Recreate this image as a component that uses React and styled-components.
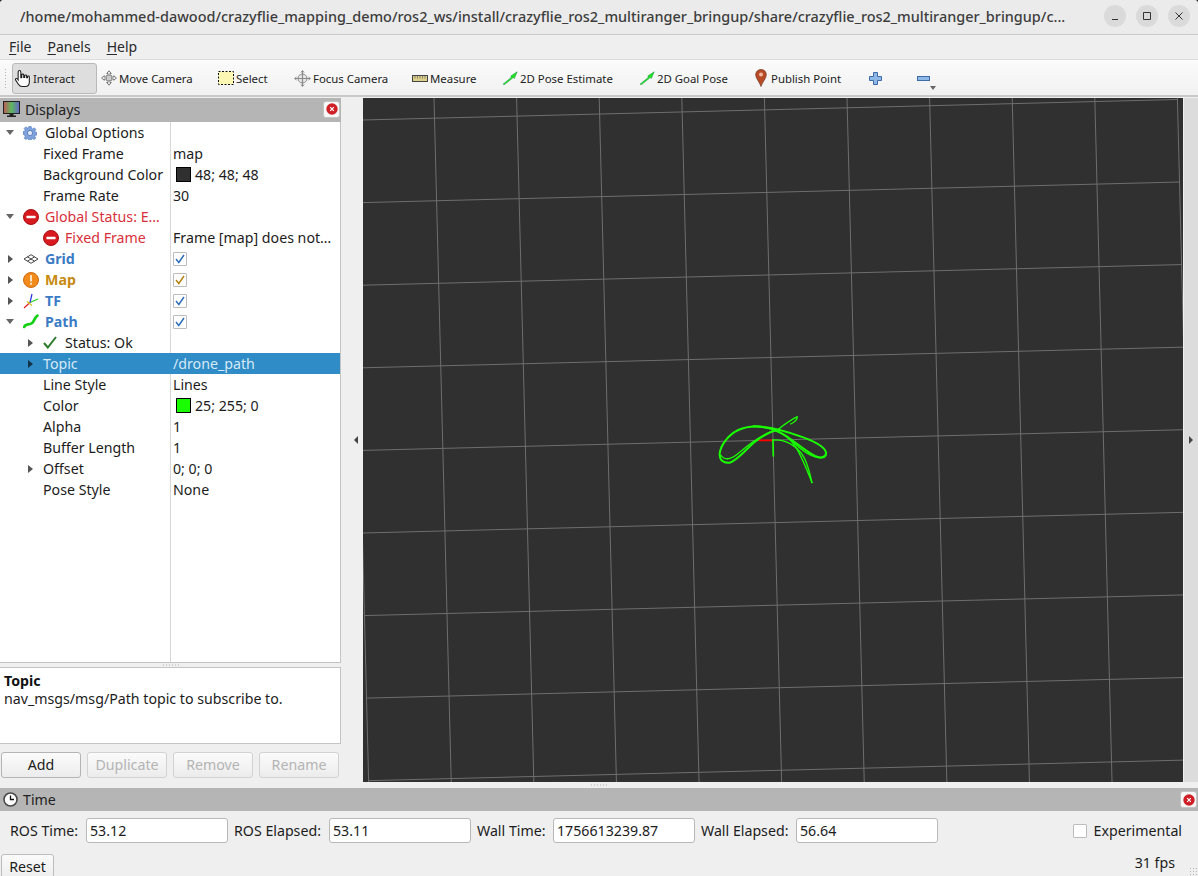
import React from "react";
import styled, { createGlobalStyle } from "styled-components";

const Global = createGlobalStyle`
  html, body { margin: 0; padding: 0; background: #2c2c2c; }
  * { box-sizing: border-box; }
  body { font-family: "Noto Sans", "Open Sans", sans-serif; font-size: 14.2px; color: #1c1c1c; }
`;

const Win = styled.div`
  width: 1198px;
  height: 876px;
  overflow: hidden;
  background: #efefef;
  border-radius: 4px 4px 0 0;
  display: flex;
  flex-direction: column;
`;

const TitleBar = styled.div`
  height: 35px;
  flex: none;
  background: #ebebeb;
  border-bottom: 1px solid #c9c9c9;
  display: flex;
  align-items: center;
  padding: 0 8px 2px 20px;
`;

const TitleText = styled.div`
  flex: 1;
  font-size: 14.45px;
  font-weight: 500;
  color: #3d3d3d;
  white-space: nowrap;
`;

const WinBtn = styled.div`
  width: 22px;
  height: 22px;
  border-radius: 50%;
  background: #dadada;
  margin-left: 10px;
  display: grid;
  place-items: center;
`;

const MenuBar = styled.div`
  height: 24px;
  flex: none;
  background: #efefef;
  display: flex;
  gap: 16px;
  padding: 0 0 2px 9px;
  align-items: center;
  font-size: 14px;
`;

const MenuItem = styled.span`
  color: #2a2a2a;
  u { text-underline-offset: 2px; }
`;

const ToolBar = styled.div`
  height: 38px;
  flex: none;
  background: linear-gradient(#fbfbfb, #f1f1f1);
  border-top: 1px solid #dcdcdc;
  border-bottom: 2px solid #c9c9c9;
  display: flex;
  align-items: center;
  padding: 1px 0 0 4px;
  font-size: 11.4px;
  position: relative;
`;

const Grip = styled.div`
  width: 4px;
  height: 20px;
  margin-right: 4px;
  background-image: radial-gradient(#b4b4b4 0.7px, transparent 0.8px);
  background-size: 3px 3px;
`;

const Tool = styled.div`
  width: ${(p) => p.$w}px;
  height: 31px;
  flex: none;
  display: flex;
  align-items: center;
  gap: ${(p) => p.$gap ?? 2}px;
  padding-left: ${(p) => p.$pad ?? 4}px;
  color: #222;
  white-space: nowrap;
  ${(p) =>
    p.$active &&
    `background: #dedede; border: 1px solid #b9b9b9; border-radius: 3px;`}
`;

const MoreArrow = styled.div`
  position: absolute;
  left: 930px;
  top: 26px;
  border: 3px solid transparent;
  border-top: 4px solid #666;
  border-bottom: 0;
`;

const Main = styled.div`
  flex: 1;
  min-height: 0;
  display: flex;
  padding-top: 1px;
`;

const Sidebar = styled.div`
  width: 341px;
  flex: none;
  display: flex;
  flex-direction: column;
`;

const DockHeader = styled.div`
  height: ${(p) => p.$h}px;
  flex: none;
  background: #b5b5b5;
  display: flex;
  align-items: center;
  gap: 5px;
  padding: 0 1px ${(p) => p.$pb}px 3px;
  font-size: 14.2px;
  color: #222;
`;

const DockTitle = styled.span`
  flex: 1;
`;

const CloseBtn = styled.div`
  width: 17px;
  height: 17px;
  background: #f8f8f8;
  border: 1px solid #c4c4c4;
  border-radius: 3px;
  display: grid;
  place-items: center;
`;

const Tree = styled.div`
  height: 541px;
  flex: none;
  background: #fff;
  border-right: 1px solid #c4c4c4;
  border-bottom: 1px solid #c4c4c4;
  position: relative;
  &::before {
    content: "";
    position: absolute;
    left: 170px;
    top: 0;
    bottom: 0;
    width: 1px;
    background: #d8d8d8;
  }
`;

const Row = styled.div`
  height: 21px;
  display: grid;
  grid-template-columns: 170px 1fr;
  align-items: center;
  position: relative;
  white-space: nowrap;
  background: ${(p) => (p.$selected ? "#308cc6" : "transparent")};
  color: ${(p) => (p.$selected ? "#d6e9f6" : "#1c1c1c")};
`;

const NameCell = styled.div`
  display: flex;
  align-items: center;
  padding-left: ${(p) => p.$level * 20}px;
`;

const ArrowSlot = styled.div`
  width: 20px;
  flex: none;
  display: grid;
  place-items: center;
`;

const Arrow = styled.div`
  width: 0;
  height: 0;
  border-style: solid;
  ${(p) =>
    p.$dir === "down"
      ? `border-width: 5px 4px 0 4px; border-color: #666 transparent transparent transparent;`
      : `border-width: 4px 0 4px 5px; border-color: transparent transparent transparent ${p.$dark ? "#12324a" : "#555"};`}
`;

const IconSlot = styled.div`
  width: 25px;
  flex: none;
  display: flex;
  align-items: center;
  padding-left: 3px;
`;

const Label = styled.span`
  padding-left: ${(p) => (p.$plain ? 3 : 0)}px;
  font-weight: ${(p) => (p.$bold ? 700 : 400)};
  color: ${(p) => p.$color || "inherit"};
`;

const ValueCell = styled.div`
  padding-left: 3px;
  display: flex;
  align-items: center;
`;

const Swatch = styled.span`
  width: 15px;
  height: 15px;
  margin: 0 4px 0 3px;
  background: ${(p) => p.$color};
  border: 1px solid #000;
`;

const Check = styled.span`
  width: 14px;
  height: 14px;
  background: #fff;
  border: 1px solid #bcbcbc;
  border-radius: 1px;
  display: grid;
  place-items: center;
`;

const HSplit = styled.div`
  height: ${(p) => p.$h}px;
  flex: none;
  display: flex;
  justify-content: center;
  align-items: center;
`;

const Dots = styled.div`
  width: 18px;
  height: 2px;
  background-image: radial-gradient(#b0b0b0 0.7px, transparent 0.8px);
  background-size: 3px 2px;
`;

const HelpBox = styled.div`
  height: 77px;
  flex: none;
  background: #fff;
  border: 1px solid #c4c4c4;
  border-left: 0;
  padding: 4px 4px;
  line-height: 18px;
`;

const HelpTitle = styled.div`
  font-weight: 700;
  color: #111;
`;

const ButtonRow = styled.div`
  display: flex;
  gap: 6px;
  padding: 8px 0 0 1px;
`;

const Btn = styled.div`
  width: ${(p) => p.$w || 80}px;
  height: 26px;
  flex: none;
  display: grid;
  place-items: center;
  padding-bottom: 2px;
  border: 1px solid ${(p) => (p.$off ? "#d2d2d2" : "#b4b4b4")};
  border-radius: 3px;
  background: linear-gradient(#fbfbfb, #ececec);
  color: ${(p) => (p.$off ? "#b4b4b4" : "#1c1c1c")};
`;

const SideGap = styled.div`
  width: 22px;
  flex: none;
  display: flex;
  align-items: center;
  padding-left: 13px;
`;

const Triangle = styled.div`
  width: 0;
  height: 0;
  border-style: solid;
  border-color: transparent;
  border-width: 4px 0;
  ${(p) =>
    p.$left
      ? `border-right: 4px solid #444; border-left: 0;`
      : `border-left: 4px solid #444; border-right: 0;`}
`;

const ViewColumn = styled.div`
  flex: 1;
  min-width: 0;
  display: flex;
`;

const ViewPort = styled.svg`
  display: block;
  width: 820px;
  height: 684px;
  background: #303030;
  flex: none;
`;

const RightStrip = styled.div`
  flex: 1;
  height: 684px;
  margin-left: 1px;
  background: #dcdcdc;
  display: flex;
  align-items: center;
  justify-content: center;
`;

const BottomSplit = styled.div`
  height: 6px;
  flex: none;
  display: flex;
  justify-content: center;
  align-items: center;
`;

const TimeRow = styled.div`
  height: 39px;
  flex: none;
  display: flex;
  align-items: flex-start;
  padding: 7px 16px 0 10px;
`;

const TimeLabel = styled.span`
  width: ${(p) => p.$w}px;
  flex: none;
  line-height: 25px;
  white-space: nowrap;
`;

const TimeInput = styled.div`
  width: 142px;
  height: 25px;
  flex: none;
  margin-right: 6px;
  background: #fff;
  border: 1px solid #b9b9b9;
  border-radius: 3px;
  padding-left: 3px;
  line-height: 23px;
`;

const Experimental = styled.div`
  margin-left: auto;
  display: flex;
  align-items: center;
  gap: 7px;
  height: 25px;
`;

const FooterRow = styled.div`
  display: flex;
  justify-content: space-between;
  padding: 4px 23px 0 1px;
  height: 26px;
  position: relative;
`;

const ResetBtn = styled(Btn)`
  height: 28px;
  padding-bottom: 4px;
  border-color: #bdbdbd;
`;

const Fps = styled.span`
  padding-top: 1px;
  line-height: 16px;
`;

const CornerGrip = styled.div`
  position: absolute;
  right: 0;
  bottom: 0;
  width: 9px;
  height: 9px;
  background-image: radial-gradient(#b8b8b8 0.7px, transparent 0.8px);
  background-size: 3px 3px;
`;

/* ---- icons ---- */
const HandIcon = () => (
  <svg width="17" height="17" viewBox="1.2 1 14.600 16" preserveAspectRatio="none" style={{ marginRight: 1 }}>
    <path
      d="M5 1.500c.8 0 1.200.6 1.200 1.300v5.400l.8-.1V5.600c0-1 1.700-1 1.700 0v2.500h.8V6.400c0-1 1.700-1 1.700 0v2h.7V7.300c0-1 1.600-1 1.600 0v5c0 2.600-1.400 4.200-3.500 4.200H7.300c-1.600 0-2.300-.7-3.200-2.200L1.700 10.300c-.6-1 .7-1.900 1.500-1l.7 1V2.800c0-.7.4-1.300 1.100-1.300z"
      fill="#fff"
      stroke="#1a1a1a"
      strokeWidth=".9"
    />
  </svg>
);

const MoveIcon = () => (
  <svg width="16" height="16" viewBox="0 0 16 16" fill="#eee" stroke="#777" strokeWidth="1">
    <path d="M8 .8l2.300 2.700H9v1.800l-1 .6-1-.6V3.500H5.700z" />
    <path d="M8 15.200l2.300-2.700H9v-1.800l-1-.6-1 .6v1.800H5.700z" />
    <path d="M.6 8l2.700-2.300V7H5l.8 1-.8 1H3.300v1.300z" />
    <path d="M15.400 8l-2.700-2.300V7H11l-.8 1 .8 1h1.700v1.300z" />
    <rect x="5.500" y="5.500" width="5" height="5" fill="#ccc" stroke="#999" />
  </svg>
);

const SelectIcon = () => (
  <svg width="16" height="14" viewBox="0 0 16 14">
    <rect x=".5" y=".5" width="15" height="13" fill="#fdf7b4" stroke="#111" strokeDasharray="2 1.500" />
  </svg>
);

const FocusIcon = () => (
  <svg width="17" height="17" viewBox="0 0 17 17" fill="none" stroke="#8a8a8a">
    <circle cx="8.500" cy="8.500" r="4.500" fill="#e6e6e6" />
    <path d="M8.500 1v15M1 8.500h15" strokeWidth="1.200" />
    <path d="M7 2.500l1.500-2 1.500 2M7 14.500l1.500 2 1.500-2M2.500 7L.5 8.500 2.500 10M14.500 7l2 1.500-2 1.500" />
  </svg>
);

const RulerIcon = () => (
  <svg width="16" height="7" viewBox="0 0 16 7">
    <rect x=".5" y=".5" width="15" height="6" fill="#ddd08a" stroke="#444" />
    <path d="M3 1v2.500M5.500 1v2.500M8 1v2.500M10.500 1v2.500M13 1v2.500" stroke="#666" strokeWidth=".7" />
  </svg>
);

const PoseIcon = () => (
  <svg width="16" height="14" viewBox="0 0 16 14">
    <path d="M1 13.200L9.500 6.200 8.800 5 15.200 .8 12.300 7.500 11.300 6.500 2.500 13.600z" fill="#1fe81f" stroke="#0f8a3c" strokeWidth=".5" />
  </svg>
);

const PinIcon = () => (
  <svg width="12" height="18" viewBox="0 0 12 18">
    <path d="M6 .5C2.800.5.700 2.800.7 5.800c0 3.700 3.800 7 5.300 11.700 1.500-4.700 5.300-8 5.300-11.700C11.300 2.800 9.200.5 6 .5z" fill="#b84a26" stroke="#6e3a20" strokeWidth=".7" />
    <circle cx="6" cy="5.500" r="2" fill="#f0b9a0" />
  </svg>
);

const PlusIcon = () => (
  <svg width="13" height="13" viewBox="0 0 13 13">
    <path d="M4.500.5h4v4h4v4h-4v4h-4v-4h-4v-4h4z" fill="#8fb8e6" stroke="#3c6ca8" />
  </svg>
);

const MinusIcon = () => (
  <svg width="13" height="5" viewBox="0 0 13 5">
    <rect x=".5" y=".5" width="12" height="4" fill="#8fb8e6" stroke="#3c6ca8" />
  </svg>
);

const MonitorIcon = () => (
  <svg width="17" height="17" viewBox="0 0 17 17">
    <defs>
      <linearGradient id="rgb" x1="0" x2="1" y1="0" y2="0">
        <stop offset="0" stopColor="#c05858" />
        <stop offset=".5" stopColor="#5fb85f" />
        <stop offset="1" stopColor="#6666c8" />
      </linearGradient>
    </defs>
    <rect x=".5" y=".5" width="16" height="12" fill="url(#rgb)" stroke="#222" />
    <path d="M6.500 13h4v1.500h2.500V16H4v-1.500h2.500z" fill="#222" />
  </svg>
);

const GearIcon = () => (
  <svg width="14" height="14" viewBox="0 0 14 14">
    <path
      d="M5.800.6h2.400l.3 1.800 1.200.5L11.200 1.800l1.700 1.700-1.100 1.500.5 1.200 1.800.3v2.400l-1.800.3-.5 1.200 1.100 1.500-1.700 1.700-1.500-1.100-1.200.5-.3 1.800H5.800l-.3-1.800-1.200-.5-1.500 1.100-1.700-1.700 1.100-1.500-.5-1.200L-.1 8V5.600l1.800-.3.5-1.200-1.100-1.500 1.700-1.700 1.500 1.100 1.200-.5z"
      fill="#7ea2dc"
      stroke="#4a72b8"
      strokeWidth=".6"
    />
    <circle cx="7" cy="7" r="2.600" fill="#dfe9f8" stroke="#4a72b8" strokeWidth=".8" />
  </svg>
);

const ErrorIcon = () => (
  <svg width="16" height="16" viewBox="0 0 16 16">
    <circle cx="8" cy="8" r="7.500" fill="#d61a1f" stroke="#a80f12" />
    <rect x="3.500" y="6.700" width="9" height="2.600" rx=".5" fill="#fff" />
  </svg>
);

const WarnIcon = () => (
  <svg width="16" height="16" viewBox="0 0 16 16">
    <circle cx="8" cy="8" r="7.500" fill="#f28a1c" stroke="#d06a10" />
    <rect x="7" y="3" width="2" height="6.500" rx=".6" fill="#fde6c8" />
    <rect x="7" y="10.800" width="2" height="2" rx=".6" fill="#fde6c8" />
  </svg>
);

const GridIcon = () => (
  <svg width="16" height="10" viewBox="0 0 16 10" fill="none" stroke="#333" strokeWidth=".9">
    <path d="M8 .7L15 5 8 9.300 1 5z" />
    <path d="M4.500 2.900L11.500 7.200M11.500 2.900L4.500 7.200" />
  </svg>
);

const TfIcon = () => (
  <svg width="16" height="16" viewBox="0 0 16 16" fill="none" strokeWidth="1.200">
    <path d="M7 9.500L1 15" stroke="#e02020" />
    <path d="M7 9.500L15 6" stroke="#20d020" />
    <path d="M7 9.500L9 1" stroke="#2030e0" />
    <path d="M4 8.500L9 12.500" stroke="#d8c020" />
  </svg>
);

const PathIcon = () => (
  <svg width="16" height="15" viewBox="0 0 16 15" fill="none">
    <path d="M1.200 13c1.500-4 5-1.500 8-4 2-1.700 2-5 5.300-7.500" stroke="#12d012" strokeWidth="2.600" strokeLinecap="round" />
  </svg>
);

const OkIcon = () => (
  <svg width="14" height="13" viewBox="0 0 14 13" fill="none">
    <path d="M1 7l3.800 4.500L13 1" stroke="#2b7a2b" strokeWidth="2" />
  </svg>
);

const TickIcon = ({ color }) => (
  <svg width="10" height="10" viewBox="0 0 10 10" fill="none">
    <path d="M1 5l2.800 3.500L9 1" stroke={color} strokeWidth="1.500" />
  </svg>
);

const CloseDot = () => (
  <svg width="12" height="12" viewBox="0 0 12 12">
    <circle cx="6" cy="6" r="5.700" fill="#cf2027" />
    <path d="M4.200 4.200l3.600 3.600M7.800 4.200L4.200 7.800" stroke="#fff" strokeWidth="1.200" />
  </svg>
);

const ClockIcon = () => (
  <svg width="15" height="15" viewBox="0 0 15 15">
    <circle cx="7.500" cy="7.500" r="6.500" fill="#fff" stroke="#4a4a4a" strokeWidth="1.600" />
    <path d="M7.500 3.500v4h3.500" fill="none" stroke="#111" strokeWidth="1.300" />
  </svg>
);

const WinGlyph = ({ d }) => (
  <svg width="12" height="12" viewBox="0 0 12 12" fill="none" stroke="#333" strokeWidth="1">
    <path d={d} />
  </svg>
);

/* ---- data ---- */
const BLUE = "#3a7bc4";
const RED = "#d8303a";
const AMBER = "#c98a12";

const rows = [
  { level: 0, open: true, icon: <GearIcon />, name: "Global Options" },
  { level: 1, none: true, name: "Fixed Frame", value: "map" },
  { level: 1, none: true, name: "Background Color", value: "48; 48; 48", swatch: "#303030" },
  { level: 1, none: true, name: "Frame Rate", value: "30" },
  { level: 0, open: true, icon: <ErrorIcon />, name: "Global Status: E…", color: RED },
  { level: 1, none: true, icon: <ErrorIcon />, name: "Fixed Frame", color: RED, value: "Frame [map] does not…" },
  { level: 0, icon: <GridIcon />, name: "Grid", color: BLUE, bold: true, check: "#2f6fb5" },
  { level: 0, icon: <WarnIcon />, name: "Map", color: AMBER, bold: true, check: "#b5820f" },
  { level: 0, icon: <TfIcon />, name: "TF", color: BLUE, bold: true, check: "#2f6fb5" },
  { level: 0, open: true, icon: <PathIcon />, name: "Path", color: BLUE, bold: true, check: "#2f6fb5" },
  { level: 1, icon: <OkIcon />, name: "Status: Ok" },
  { level: 1, plain: true, name: "Topic", value: "/drone_path", selected: true },
  { level: 1, none: true, name: "Line Style", value: "Lines" },
  { level: 1, none: true, name: "Color", value: "25; 255; 0", swatch: "#19ff00" },
  { level: 1, none: true, name: "Alpha", value: "1" },
  { level: 1, none: true, name: "Buffer Length", value: "1" },
  { level: 1, plain: true, name: "Offset", value: "0; 0; 0" },
  { level: 1, none: true, name: "Pose Style", value: "None" },
];

const TreeRow = ({ r }) => (
  <Row $selected={r.selected}>
    <NameCell $level={r.level}>
      <ArrowSlot>
        {!r.none && <Arrow $dir={r.open ? "down" : "right"} $dark={r.selected} />}
      </ArrowSlot>
      {r.icon && <IconSlot>{r.icon}</IconSlot>}
      <Label $plain={!r.icon} $bold={r.bold} $color={r.color}>
        {r.name}
      </Label>
    </NameCell>
    <ValueCell>
      {r.swatch && <Swatch $color={r.swatch} />}
      {r.value}
      {r.check && (
        <Check>
          <TickIcon color={r.check} />
        </Check>
      )}
    </ValueCell>
  </Row>
);

/* grid of the 3D view, in viewport coordinates */
const SPACING = 82.6;
const SKEW = 0.0252;
const gridV = (k, y) => 71 + SPACING * k + SKEW * y;
const gridH = (j, x) => 22 + SPACING * j - SKEW * x;

const GridLines = () => {
  const lines = [];
  for (let k = -1; k <= 9; k++) {
    lines.push(<line key={"v" + k} x1={gridV(k, 0)} y1={0} x2={gridV(k, 684)} y2={684} />);
  }
  for (let j = 0; j <= 8; j++) {
    const x1 = gridV(-1, 22 + SPACING * j);
    const x2 = gridV(9, 22 + SPACING * j);
    lines.push(<line key={"h" + j} x1={x1} y1={gridH(j, x1)} x2={x2} y2={gridH(j, x2)} />);
  }
  return <g stroke="#6e6e6e" strokeWidth="1">{lines}</g>;
};

/* traced from the picture: 3x scale around (690,400) of the window */
const DronePath = () => (
  <g transform="translate(327 302) scale(0.3333)" fill="none" stroke="#19ff00" strokeLinejoin="round" strokeLinecap="round">
    <path d="M208 121H246" stroke="#ff0000" strokeWidth="5" />
    <path d="M249 120L250 168" strokeWidth="5" />
    <path d="M248 120C285 116 322 138 342 172C355 198 361 225 366 248" strokeWidth="4" />
    <path d="M366 248C352 212 335 170 318 142C300 115 280 100 258 92" strokeWidth="4" />
    <path d="M258 92C225 78 180 74 145 90C115 104 92 135 89 160C88 180 100 190 118 188C140 184 165 150 195 125C215 110 240 95 262 90" strokeWidth="6" />
    <path d="M92 165C104 184 125 178 150 156C180 130 215 105 250 92" strokeWidth="4" />
    <path d="M262 90C285 72 305 58 322 50C322 60 310 68 302 72" strokeWidth="4" />
    <path d="M190 79C235 78 285 92 340 112C375 125 405 140 408 158C410 172 392 176 375 168C345 152 315 125 285 106C270 97 260 92 250 90" strokeWidth="6" />
    <path d="M300 118C325 143 365 178 400 173C407 171 409 165 408 158" strokeWidth="4" />
  </g>
);

export default function App() {
  return (
    <Win>
      <Global />
      <TitleBar>
        <TitleText>
          /home/mohammed-dawood/crazyflie_mapping_demo/ros2_ws/install/crazyflie_ros2_multiranger_bringup/share/crazyflie_ros2_multiranger_bringup/c...
        </TitleText>
        <WinBtn>
          <WinGlyph d="M3 9.500h6" />
        </WinBtn>
        <WinBtn>
          <WinGlyph d="M2.500 2.500h7v7h-7z" />
        </WinBtn>
        <WinBtn>
          <WinGlyph d="M2.500 2.500l7 7M9.500 2.500l-7 7" />
        </WinBtn>
      </TitleBar>
      <MenuBar>
        <MenuItem><u>F</u>ile</MenuItem>
        <MenuItem><u>P</u>anels</MenuItem>
        <MenuItem><u>H</u>elp</MenuItem>
      </MenuBar>
      <ToolBar>
        <Grip />
        <Tool $w={85} $active $pad={2} $gap={0}><HandIcon />Interact</Tool>
        <Tool $w={117}><MoveIcon />Move Camera</Tool>
        <Tool $w={76}><SelectIcon />Select</Tool>
        <Tool $w={118} $gap={2}><FocusIcon />Focus Camera</Tool>
        <Tool $w={90}><RulerIcon />Measure</Tool>
        <Tool $w={137} $gap={2}><PoseIcon />2D Pose Estimate</Tool>
        <Tool $w={116} $gap={2}><PoseIcon />2D Goal Pose</Tool>
        <Tool $w={113} $gap={4}><PinIcon />Publish Point</Tool>
        <Tool $w={48} $pad={5}><PlusIcon /></Tool>
        <Tool $w={40} $pad={5}><MinusIcon /></Tool>
        <MoreArrow />
      </ToolBar>
      <Main>
        <Sidebar>
          <DockHeader $h={24} $pb={2}>
            <MonitorIcon />
            <DockTitle>Displays</DockTitle>
            <CloseBtn><CloseDot /></CloseBtn>
          </DockHeader>
          <Tree>
            {rows.map((r, i) => (
              <TreeRow key={i} r={r} />
            ))}
          </Tree>
          <HSplit $h={4}><Dots /></HSplit>
          <HelpBox>
            <HelpTitle>Topic</HelpTitle>
            nav_msgs/msg/Path topic to subscribe to.
          </HelpBox>
          <ButtonRow>
            <Btn>Add</Btn>
            <Btn $off>Duplicate</Btn>
            <Btn $off>Remove</Btn>
            <Btn $off>Rename</Btn>
          </ButtonRow>
        </Sidebar>
        <SideGap><Triangle $left /></SideGap>
        <ViewColumn>
          <ViewPort viewBox="0 0 820 684">
            <GridLines />
            <DronePath />
          </ViewPort>
          <RightStrip><Triangle /></RightStrip>
        </ViewColumn>
      </Main>
      <BottomSplit><Dots /></BottomSplit>
      <DockHeader $h={23} $pb={0}>
        <ClockIcon />
        <DockTitle>Time</DockTitle>
        <CloseBtn><CloseDot /></CloseBtn>
      </DockHeader>
      <TimeRow>
        <TimeLabel $w={76}>ROS Time:</TimeLabel>
        <TimeInput>53.12</TimeInput>
        <TimeLabel $w={95}>ROS Elapsed:</TimeLabel>
        <TimeInput>53.11</TimeInput>
        <TimeLabel $w={76}>Wall Time:</TimeLabel>
        <TimeInput>1756613239.87</TimeInput>
        <TimeLabel $w={95}>Wall Elapsed:</TimeLabel>
        <TimeInput>56.64</TimeInput>
        <Experimental><Check />Experimental</Experimental>
      </TimeRow>
      <FooterRow>
        <ResetBtn $w={53}>Reset</ResetBtn>
        <Fps>31 fps</Fps>
        <CornerGrip />
      </FooterRow>
    </Win>
  );
}
